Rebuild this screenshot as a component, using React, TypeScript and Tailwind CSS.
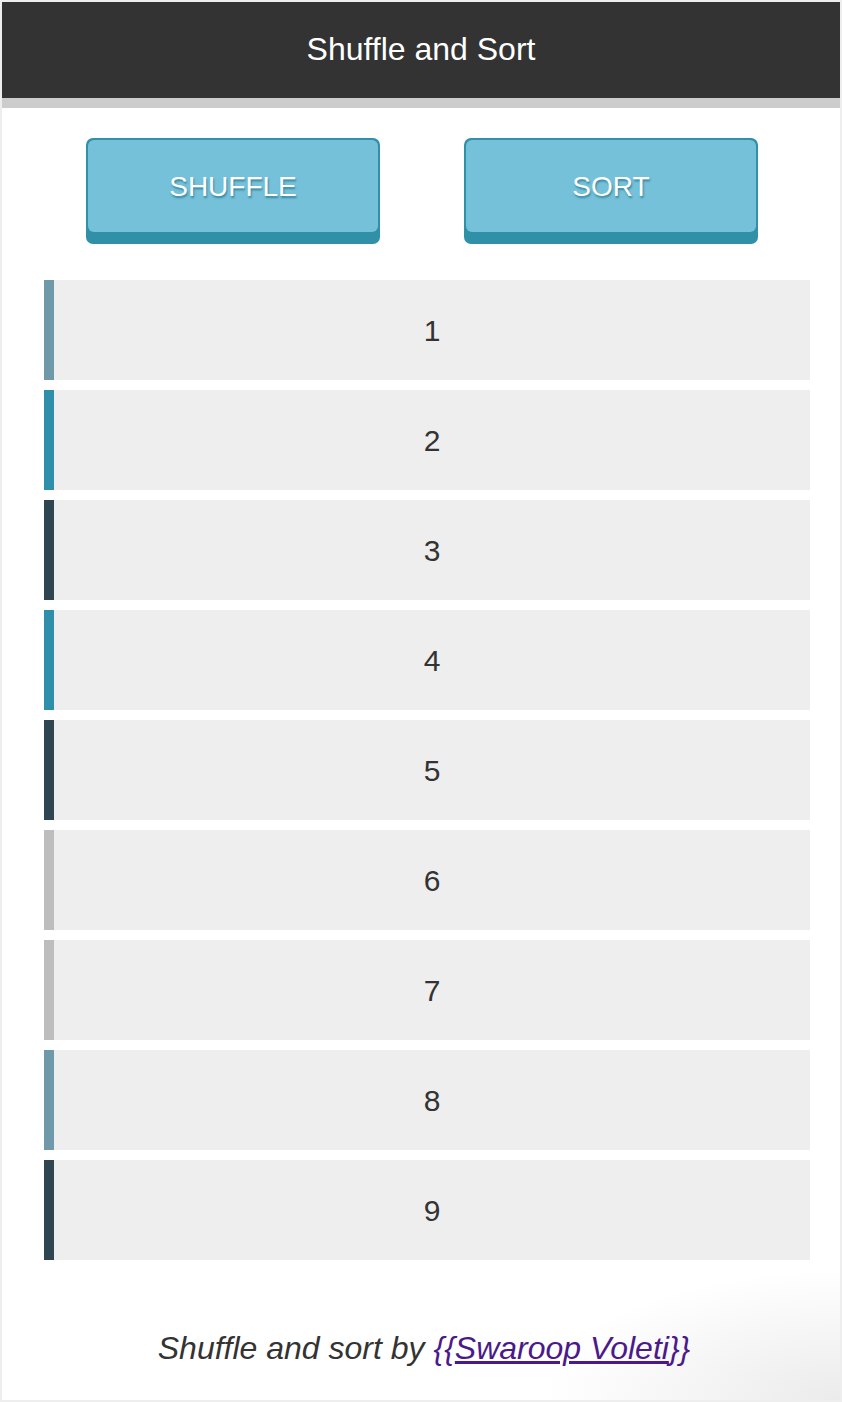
const items = [
  { n: 1, bar: "border-l-[#6f98a8]" },
  { n: 2, bar: "border-l-[#2f8fab]" },
  { n: 3, bar: "border-l-[#2f4650]" },
  { n: 4, bar: "border-l-[#2f8fab]" },
  { n: 5, bar: "border-l-[#2f4650]" },
  { n: 6, bar: "border-l-[#bdbdbd]" },
  { n: 7, bar: "border-l-[#bdbdbd]" },
  { n: 8, bar: "border-l-[#6f98a8]" },
  { n: 9, bar: "border-l-[#2f4650]" },
];

function ActionButton({ label }: { label: string }) {
  return (
    <button className="w-[294px] h-[106px] rounded-[7px] bg-[#3090a8] p-[2px] pb-[12px] flex">
      <span className="flex-1 rounded-[6px] bg-[#75c1d9] flex items-center justify-center text-white text-[28px] pt-[2px] [text-shadow:1px_2px_2px_rgba(30,110,135,0.7)]">
        {label}
      </span>
    </button>
  );
}

export default function App() {
  return (
    <div
      className="w-[842px] h-[1402px] border-2 border-[#eeeeee] bg-white flex flex-col text-[#333]"
      style={{ fontFamily: '"Liberation Sans", Arial, sans-serif' }}
    >
      <header className="h-[96px] bg-[#333333] text-white text-[32px] flex items-center justify-center pb-[2px]">
        Shuffle and Sort
      </header>
      <div className="h-[10px] bg-[#cccccc]" />

      <div className="flex justify-between pl-[84px] pr-[82px] pt-[30px]">
        <ActionButton label="SHUFFLE" />
        <ActionButton label="SORT" />
      </div>

      <ul className="flex flex-col gap-[10px] mt-[36px] ml-[42px] mr-[30px]">
        {items.map((it) => (
          <li
            key={it.n}
            className={`h-[100px] bg-[#eeeeee] border-l-[10px] ${it.bar} flex items-center justify-center text-[30px] text-[#333]`}
          >
            {it.n}
          </li>
        ))}
      </ul>

      <footer className="flex-1 flex items-center justify-center pt-[36px] bg-[radial-gradient(ellipse_300px_130px_at_100%_100%,#ebebeb_0,#ffffff_100%)]">
        <p className="italic text-[32px] text-[#333] ml-[6px]">
          Shuffle and sort by{" "}
          <a href="#" className="text-[#4b1a8a]">
            <span className="inline-block">{"{{"}</span>
            <span className="underline">Swaroop Voleti</span>
            <span className="inline-block">{"}}"}</span>
          </a>
        </p>
      </footer>
    </div>
  );
}
